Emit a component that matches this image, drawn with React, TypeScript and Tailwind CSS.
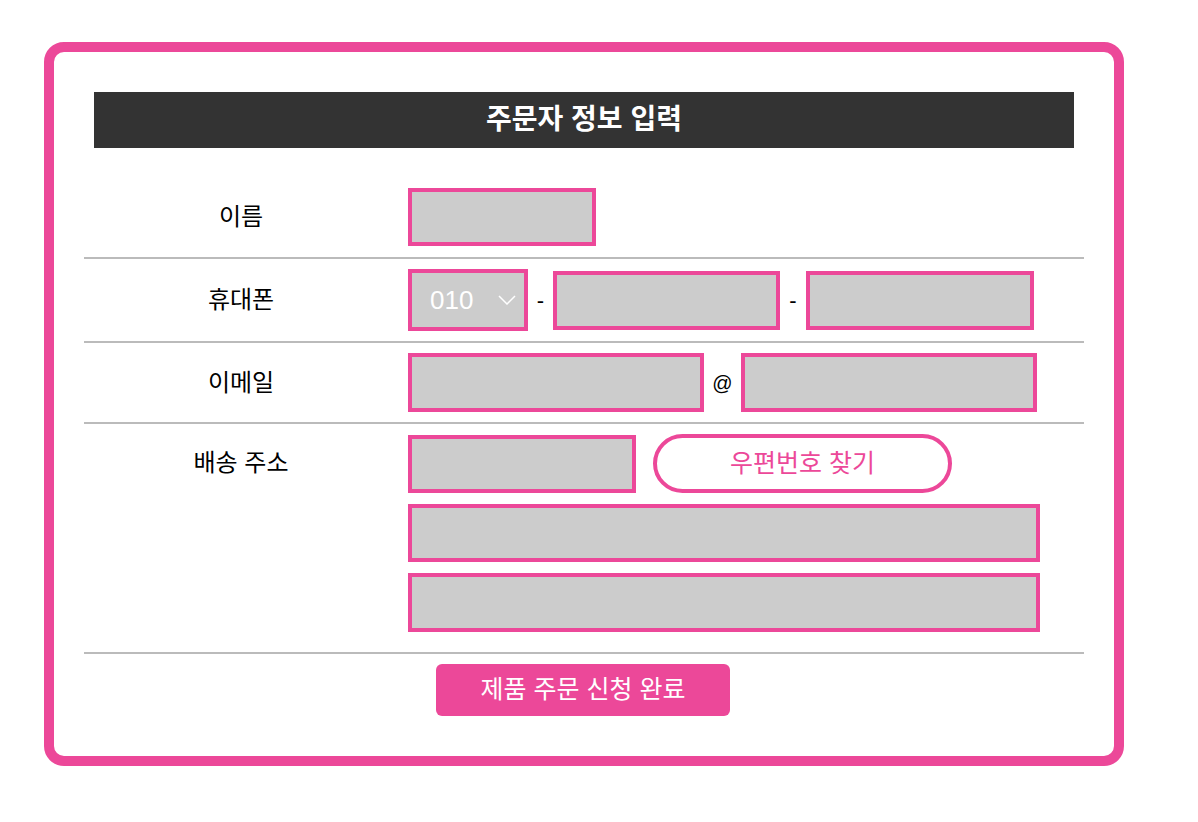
import React from "react";

const font = { fontFamily: '"Liberation Sans", "Noto Sans CJK KR", sans-serif' };

function Box({ w, h = 58 }: { w: number; h?: number }) {
  return (
    <div
      className="box-border border-4 border-[#ec4899] bg-[#cccccc] shrink-0"
      style={{ width: w, height: h }}
    />
  );
}

function Label({ children }: { children: React.ReactNode }) {
  return (
    <div className="w-[314px] shrink-0 h-[58px] flex items-center justify-center text-[24px] text-black">
      {children}
    </div>
  );
}

export default function App() {
  return (
    <div className="min-h-screen bg-white" style={font}>
      <div className="ml-[44px] pt-[42px]">
        <div className="w-[1080px] box-border border-[10px] border-[#ec4899] rounded-[20px] bg-white px-[30px] pt-[40px] pb-[40px]">
          <div className="mx-[10px] h-[56px] bg-[#333333] flex items-center justify-center text-white text-[28px] font-bold">
            주문자 정보 입력
          </div>

          <div className="mt-[30px]">
            {/* 이름 */}
            <div className="flex border-b-2 border-[#bbbbbb] pt-[10px] pb-[11px]">
              <Label>이름</Label>
              <div className="pl-[10px] flex items-center">
                <Box w={188} />
              </div>
            </div>

            {/* 휴대폰 */}
            <div className="flex border-b-2 border-[#bbbbbb] py-[10px]">
              <div className="w-[314px] shrink-0 h-[62px] flex items-center justify-center text-[24px] text-black">
                휴대폰
              </div>
              <div className="pl-[10px] flex items-center h-[62px]">
                <div className="box-border w-[120px] h-[62px] border-4 border-[#ec4899] bg-[#cccccc] flex items-center justify-between pl-[18px] pr-[8px]">
                  <span className="text-white text-[26px]">010</span>
                  <svg width="18" height="10" viewBox="0 0 18 10" fill="none">
                    <path d="M1 1 L9 9 L17 1" stroke="white" strokeWidth="1.5" />
                  </svg>
                </div>
                <span className="w-[25px] text-center text-[22px] text-black">-</span>
                <Box w={227} h={59} />
                <span className="w-[26px] text-center text-[22px] text-black">-</span>
                <Box w={228} h={59} />
              </div>
            </div>

            {/* 이메일 */}
            <div className="flex border-b-2 border-[#bbbbbb] py-[10px]">
              <div className="w-[314px] shrink-0 h-[59px] flex items-center justify-center text-[24px] text-black">
                이메일
              </div>
              <div className="pl-[10px] flex items-center">
                <Box w={296} h={59} />
                <span className="w-[37px] text-center text-[20px] text-black">@</span>
                <Box w={296} h={59} />
              </div>
            </div>

            {/* 배송 주소 */}
            <div className="flex border-b-2 border-[#bbbbbb] pt-[10px] pb-[20px]">
              <Label>배송 주소</Label>
              <div className="pl-[10px] flex flex-col gap-[11px]">
                <div className="flex items-center">
                  <Box w={228} />
                  <div className="ml-[17px] box-border w-[299px] h-[59px] border-4 border-[#ec4899] rounded-full bg-white flex items-center justify-center text-[#ec4899] text-[25px]">
                    우편번호 찾기
                  </div>
                </div>
                <Box w={632} />
                <Box w={632} h={59} />
              </div>
            </div>

            <div className="mt-[10px] flex justify-center">
              <button className="w-[294px] h-[52px] rounded-[6px] bg-[#ec4899] text-white text-[25px] flex items-center justify-center -ml-[2px]">
                제품 주문 신청 완료
              </button>
            </div>
          </div>
        </div>
      </div>
    </div>
  );
}
